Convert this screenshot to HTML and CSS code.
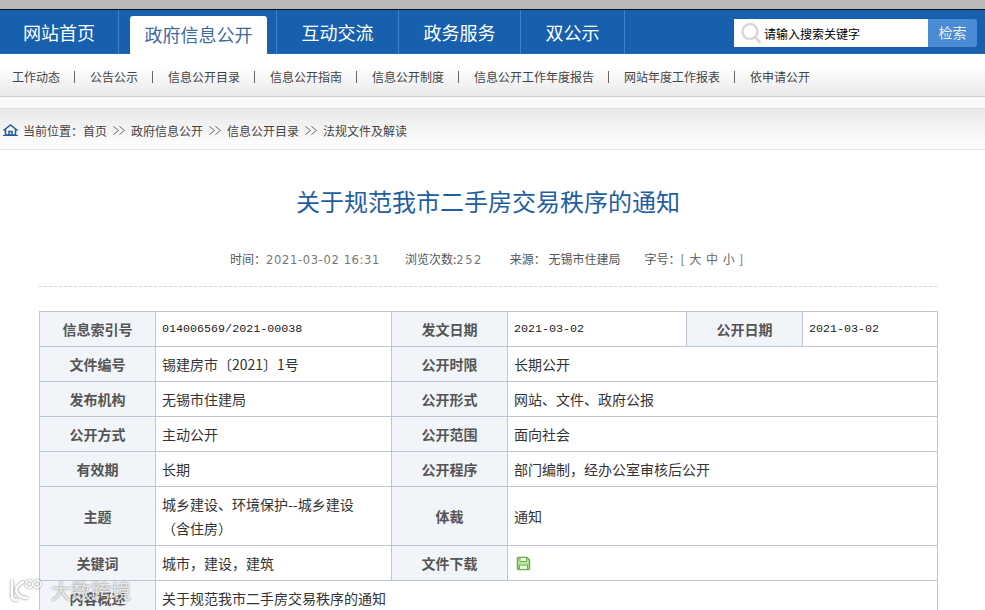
FILE: index.html
```html
<!DOCTYPE html>
<html lang="zh-CN">
<head>
<meta charset="utf-8">
<title>关于规范我市二手房交易秩序的通知</title>
<link rel="stylesheet" href="styles.css">
</head>
<body>
<div class="topbar"></div>
<header class="nav">
  <a class="nav-item w1">网站首页</a>
  <a class="nav-item w2 has-tab"><span class="tab">政府信息公开</span></a>
  <a class="nav-item w3">互动交流</a>
  <a class="nav-item w3">政务服务</a>
  <a class="nav-item w4">双公示</a>
  <form class="search">
    <div class="search-box">
      <svg class="search-icon" width="20" height="22" viewBox="0 0 20 22"><circle cx="9" cy="9.500" r="7.500" fill="none" stroke="#d8d8d8" stroke-width="2.600"/><path d="M14.500 15.500l4 4.500" stroke="#d8d8d8" stroke-width="3" stroke-linecap="round"/></svg>
      <span>请输入搜索关键字</span>
    </div>
    <div class="search-btn">检索</div>
  </form>
</header>
<nav class="subnav">
  <a>工作动态</a><i></i>
  <a>公告公示</a><i></i>
  <a>信息公开目录</a><i></i>
  <a>信息公开指南</a><i></i>
  <a>信息公开制度</a><i></i>
  <a>信息公开工作年度报告</a><i></i>
  <a>网站年度工作报表</a><i></i>
  <a>依申请公开</a>
</nav>
<div class="gap"></div>
<div class="crumb">
  <svg class="home" width="15" height="12" viewBox="0 0 15 12"><path d="M0.500 6.500L7.500 1l7 5.500M2.500 5.500V11h10V5.500M6 11V7.500h3V11" fill="none" stroke="#1c5c98" stroke-width="1.500"/><path d="M0 11.500h15" stroke="#1c5c98"/></svg>
  <span class="here">当前位置：</span><a>首页</a><b><svg width="12" height="9" viewBox="0 0 12 9"><path d="M0.500 0.500l5 4-5 4M6.500 0.500l5 4-5 4" fill="none" stroke="#666"/></svg></b><a>政府信息公开</a><b><svg width="12" height="9" viewBox="0 0 12 9"><path d="M0.500 0.500l5 4-5 4M6.500 0.500l5 4-5 4" fill="none" stroke="#666"/></svg></b><a>信息公开目录</a><b><svg width="12" height="9" viewBox="0 0 12 9"><path d="M0.500 0.500l5 4-5 4M6.500 0.500l5 4-5 4" fill="none" stroke="#666"/></svg></b><a>法规文件及解读</a>
</div>
<main class="content">
  <h1>关于规范我市二手房交易秩序的通知</h1>
  <div class="meta">
    <span class="m-time">时间：<em>2021-03-02 16:31</em></span>
    <span>浏览次数:<em class="views">252</em></span>
    <span class="src">来源： 无锡市住建局</span>
    <span>字号：<em class="size">[ 大 中 小 ]</em></span>
  </div>
  <table class="info">
    <colgroup><col class="c1"><col class="c2"><col class="c3"><col class="c4"><col class="c5"><col class="c6"></colgroup>
    <tr><th>信息索引号</th><td class="num">014006569/2021-00038</td><th>发文日期</th><td class="num">2021-03-02</td><th>公开日期</th><td class="num">2021-03-02</td></tr>
    <tr><th>文件编号</th><td>锡建房市〔2021〕1号</td><th>公开时限</th><td colspan="3">长期公开</td></tr>
    <tr><th>发布机构</th><td>无锡市住建局</td><th>公开形式</th><td colspan="3">网站、文件、政府公报</td></tr>
    <tr><th>公开方式</th><td>主动公开</td><th>公开范围</th><td colspan="3">面向社会</td></tr>
    <tr><th>有效期</th><td>长期</td><th>公开程序</th><td colspan="3">部门编制，经办公室审核后公开</td></tr>
    <tr class="tall"><th>主题</th><td>城乡建设、环境保护--城乡建设<br>（含住房）</td><th>体裁</th><td colspan="3">通知</td></tr>
    <tr><th>关键词</th><td>城市，建设，建筑</td><th>文件下载</th><td colspan="3"><svg class="save" width="15" height="15" viewBox="0 0 15 15"><path d="M1.500 2.500a1 1 0 0 1 1-1h8.500l2.500 2.500v8.500a1 1 0 0 1-1 1h-10a1 1 0 0 1-1-1z" fill="#bfe6a8" stroke="#62b043" stroke-width="1.500"/><path d="M4 1.500h6.500v4H4z" fill="#fff" stroke="#62b043"/><path d="M3.500 9h8v4.500h-8z" fill="#eaf7e0" stroke="#62b043"/></svg></td></tr>
    <tr><th>内容概述</th><td colspan="5">关于规范我市二手房交易秩序的通知</td></tr>
  </table>
</main>
<div class="watermark">
  <svg class="wm-logo" width="36" height="24" viewBox="0 0 36 24"><path d="M4 2v15c0 3 2 4 5 4M15 3c-5 3-7 6-7 9 2 5 6 7 11 7" fill="none" stroke="#fff" stroke-width="2.500" stroke-linecap="round"/><circle cx="21" cy="5" r="3.500" fill="none" stroke="#fff" stroke-width="1.500"/><circle cx="29" cy="5" r="3.500" fill="none" stroke="#fff" stroke-width="1.500"/></svg>
  <span>大数跨境</span>
</div>
</body>
</html>
```
FILE: styles.css
```css
* { box-sizing: border-box; }
html, body { margin: 0; padding: 0; height: 610px; overflow: hidden; }
body {
  position: relative;
  background: #fff;
  color: #333;
  font-family: "Noto Sans CJK SC", "Liberation Sans", sans-serif;
  font-size: 12px;
}
a { color: inherit; text-decoration: none; }

.topbar { height: 10px; background: #b9b9b9; border-bottom: 1px solid #111; }

.nav { display: flex; height: 44px; background: #1660ae; color: #fff; font-size: 18px; }
.nav-item {
  display: flex; align-items: center; justify-content: center;
  border-right: 1px solid #3b84cc;
  height: 44px;
}
.w1 { width: 119px; }
.w2 { width: 158px; }
.w3 { width: 122px; }
.w4 { width: 104px; }
.has-tab { align-items: flex-end; justify-content: flex-start; padding-left: 11px; }
.tab {
  width: 137px; height: 38px; line-height: 37px; text-align: center;
  background: #fff; color: #3f6a9f; border-radius: 3px 3px 0 0;
}
.search { display: flex; margin: 9px 0 0 109px; height: 28px; font-size: 12px; }
.search-box {
  width: 194px; background: #fff; color: #000;
  display: flex; align-items: center; gap: 3px; padding-left: 7px;
}
.search-btn {
  width: 49px; background: #4a8bd3; color: #e8f0f8; font-size: 14px;
  line-height: 27px; text-align: center; border-radius: 0 3px 3px 0;
}

.subnav {
  height: 43px; display: flex; align-items: center; padding: 3px 0 0 12px;
  background: linear-gradient(#fff 30%, #e9e9e9);
  border-bottom: 1px solid #cfcfcf;
  box-shadow: 0 1px 2px #d8d8d8;
  color: #444;
}
.subnav i {
  width: 30px; height: 12px; padding-right: 2px;
  display: flex; justify-content: center;
}
.subnav i::before { content: ""; width: 1px; height: 12px; background: #666; }

.gap { height: 12px; background: #f8f9fb; border-bottom: 1px solid #dcdcdc; }

.crumb {
  height: 41px; display: flex; align-items: center; padding: 2px 0 0 3px;
  background: linear-gradient(#e9e9e9, #fff);
  border-bottom: 1px solid #e4e4e4;
  color: #444;
}
.home { margin-right: 5px; }
.crumb b { width: 24px; display: flex; justify-content: center; }

.content { padding: 0 48px 0 39px; }
h1 {
  margin: 34px 0 0; height: 34px; line-height: 34px;
  text-align: center; color: #1f5e9f; font-size: 24px; font-weight: 400;
}
.meta {
  display: flex; gap: 24px;
  height: 69px; padding: 33px 0 0 191px; line-height: 16px;
  color: #555; white-space: pre;
  border-bottom: 1px dashed #d4d4d4;
}
.meta .m-time { width: 151px; }
.meta .src { margin-left: 3px; }
.meta em { font-style: normal; color: #777; font-family: "DejaVu Sans", sans-serif; font-size: 11.5px; letter-spacing: .65px; }
.meta .views { letter-spacing: 1.5px; }
.meta .size { font-family: inherit; font-size: 12px; letter-spacing: 0; word-spacing: 2px; color: #666; }

.info {
  width: 898px; margin-top: 24px;
  border-collapse: collapse; table-layout: fixed;
  font-size: 14px;
}
.c1 { width: 116px; } .c2 { width: 236px; } .c3 { width: 116px; }
.c4 { width: 179px; } .c5 { width: 116px; } .c6 { width: 135px; }
.info tr { height: 35px; }
.info .tall { height: 59px; }
.info th, .info td { border: 1px solid #bcc5d3; padding: 0 6px; line-height: 24px; }
.info th { background: #f1f4f9; color: #555; font-weight: 700; text-align: center; }
.info td { color: #333; text-align: left; }
.info .num { font-family: "Liberation Mono", monospace; font-size: 11.7px; color: #222; }
.save { display: block; margin-left: 2px; }

.watermark {
  position: absolute; left: 8px; top: 578px;
  display: flex; align-items: center; gap: 7px;
  color: rgba(255,255,255,.8); font-size: 20px; line-height: 26px;
  text-shadow: 0 0 2px rgba(90,90,90,.9);
  white-space: nowrap;
}
.wm-logo { opacity: .9; filter: drop-shadow(0 0 1px rgba(90,90,90,.9)); }
```
